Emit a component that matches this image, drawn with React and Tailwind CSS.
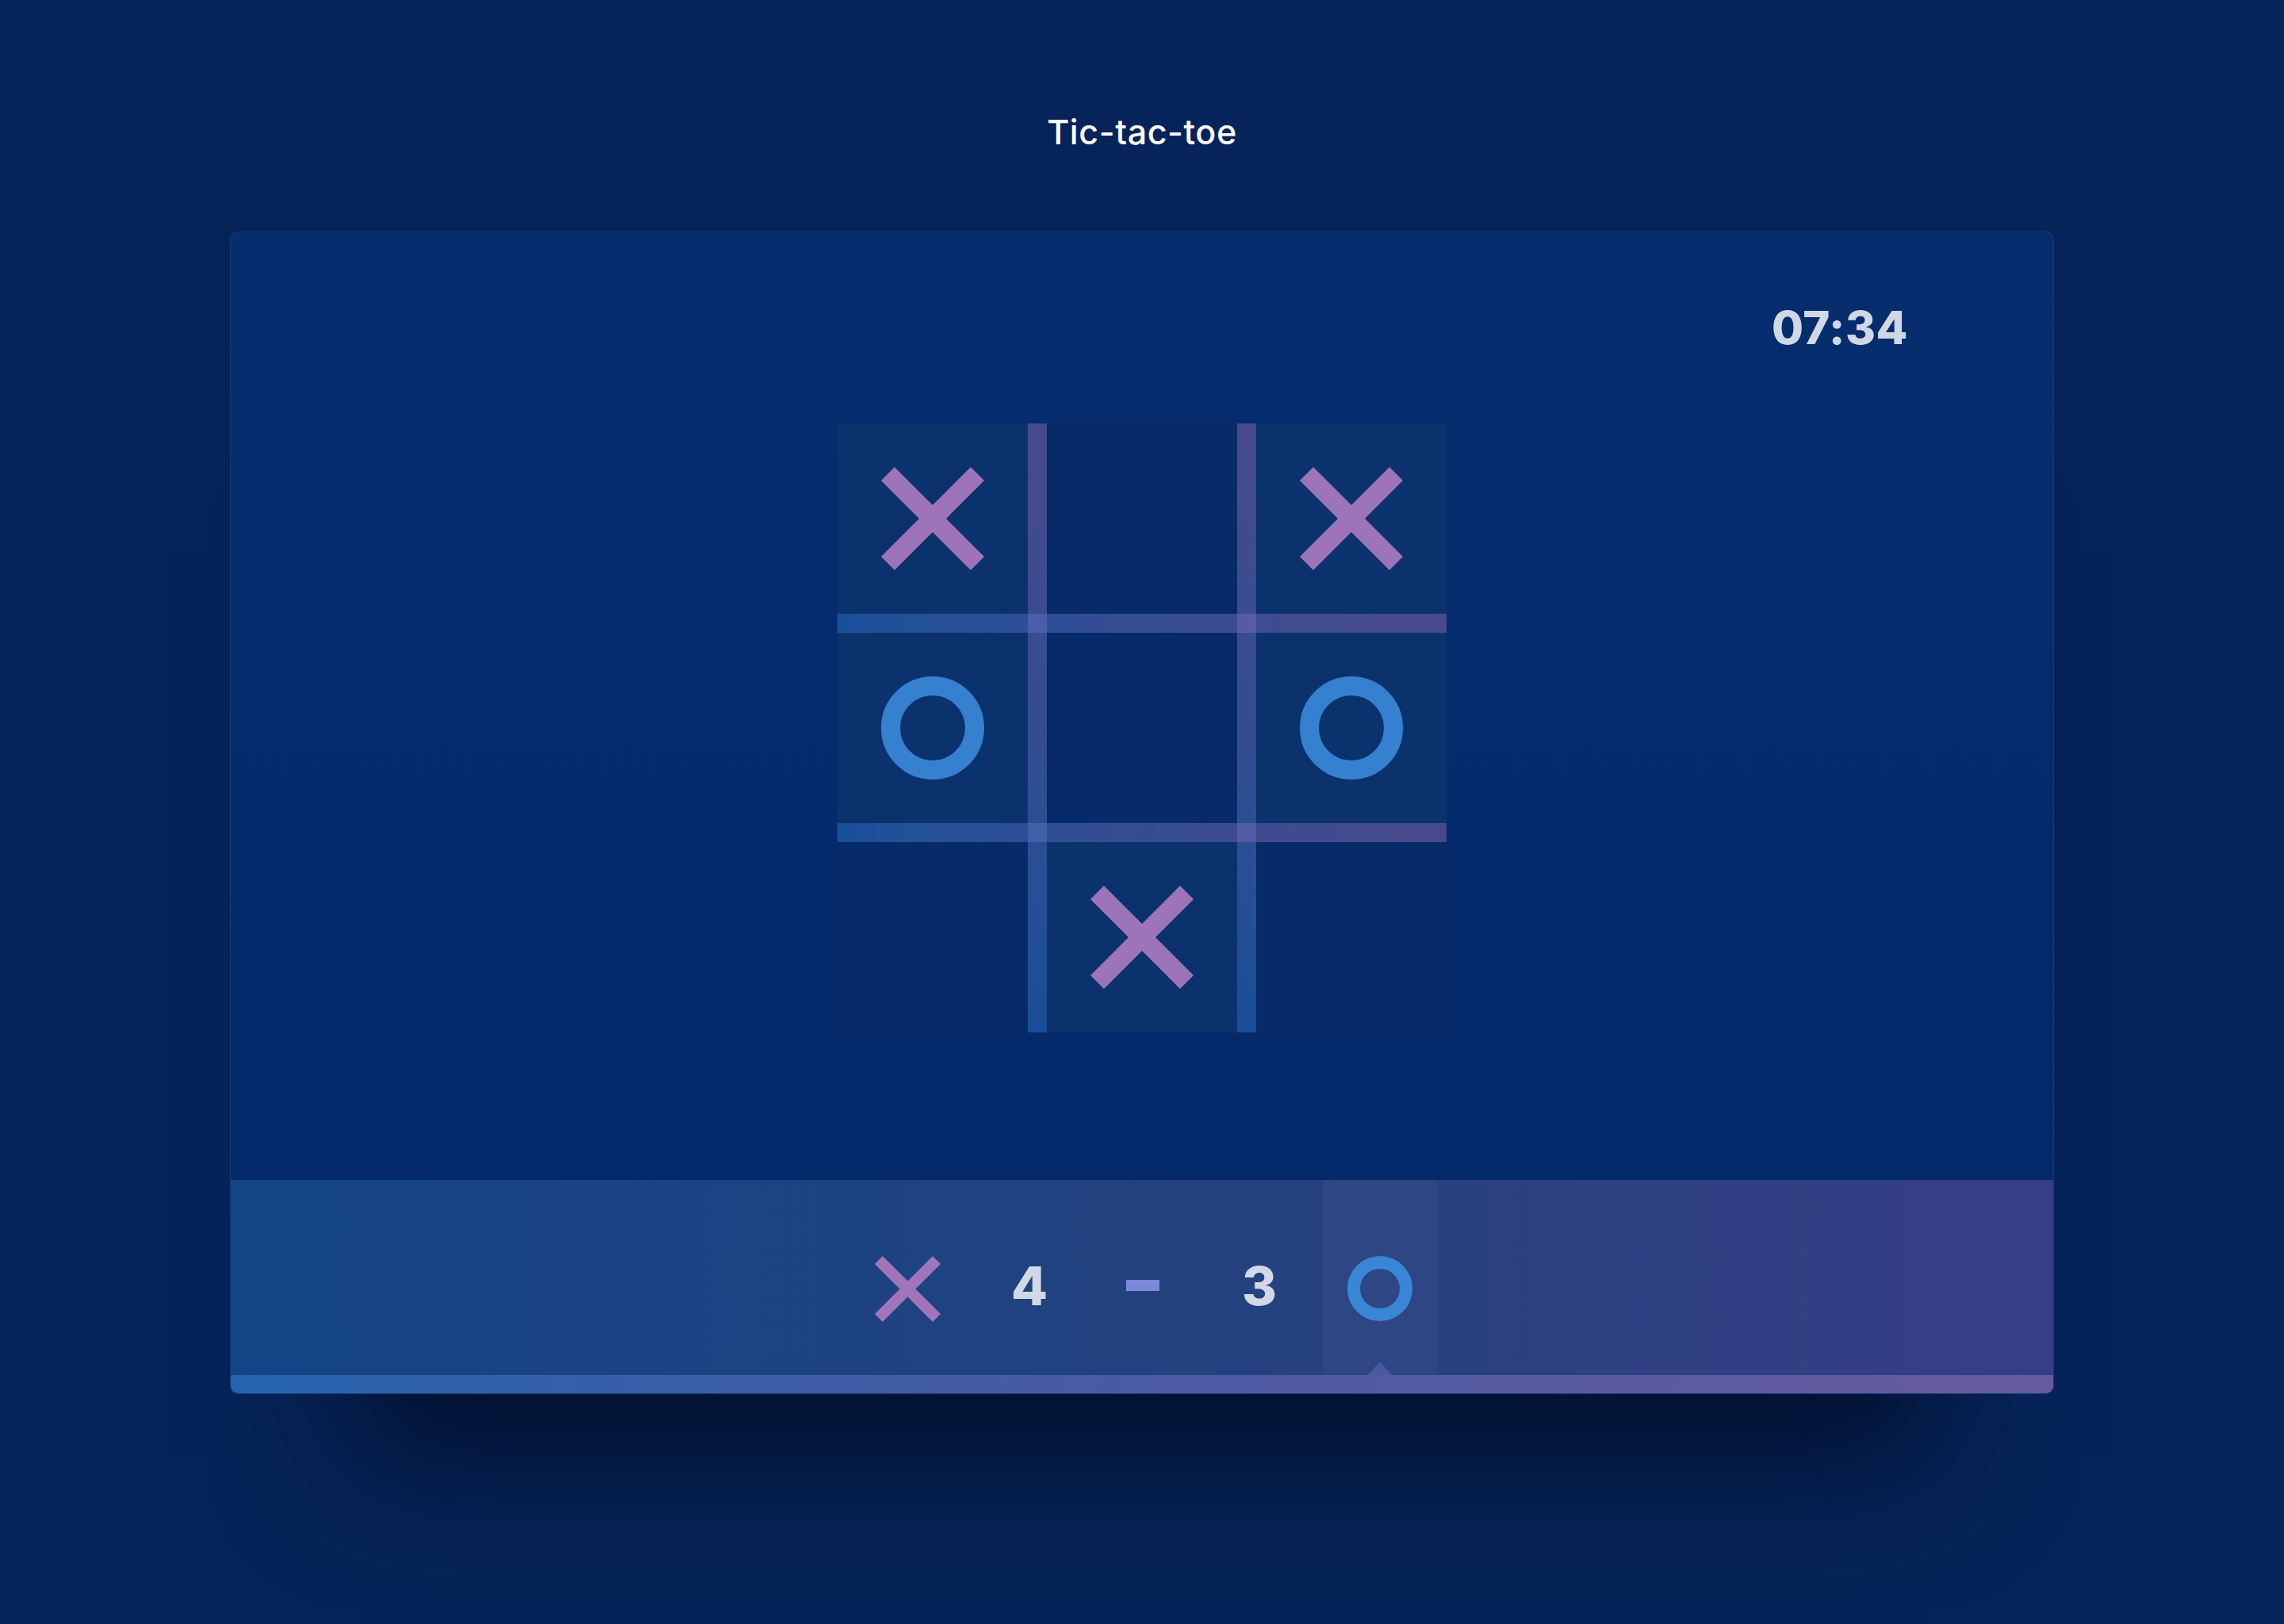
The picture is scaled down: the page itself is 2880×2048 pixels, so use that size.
import React from "react";

function XMark({ size = 130, stroke = 24, color = "#9d74b7" }) {
  const i = stroke / (2 * Math.SQRT2);
  return (
    <svg width={size} height={size} viewBox={`0 0 ${size} ${size}`}>
      <line x1={i} y1={i} x2={size - i} y2={size - i} stroke={color} strokeWidth={stroke} strokeLinecap="butt" />
      <line x1={size - i} y1={i} x2={i} y2={size - i} stroke={color} strokeWidth={stroke} strokeLinecap="butt" />
    </svg>
  );
}

function OMark({ size = 130, stroke = 24, color = "#3581d0" }) {
  const r = (size - stroke) / 2;
  return (
    <svg width={size} height={size} viewBox={`0 0 ${size} ${size}`}>
      <circle cx={size / 2} cy={size / 2} r={r} fill="none" stroke={color} strokeWidth={stroke} />
    </svg>
  );
}

const cells = [
  { c: "col-start-1", r: "row-start-1", v: "X" },
  { c: "col-start-3", r: "row-start-1", v: "" },
  { c: "col-start-5", r: "row-start-1", v: "X" },
  { c: "col-start-1", r: "row-start-3", v: "O" },
  { c: "col-start-3", r: "row-start-3", v: "" },
  { c: "col-start-5", r: "row-start-3", v: "O" },
  { c: "col-start-1", r: "row-start-5", v: "" },
  { c: "col-start-3", r: "row-start-5", v: "X" },
  { c: "col-start-5", r: "row-start-5", v: "" },
];

function Board() {
  return (
    <div className="grid grid-cols-[240px_24px_240px_24px_240px] grid-rows-[240px_24px_240px_24px_240px] w-[768px] h-[768px]">
      {cells.map((cell, idx) => (
        <div
          key={idx}
          className={`${cell.c} ${cell.r} flex items-center justify-center ${
            cell.v ? "bg-[#0c326e]" : "bg-[#072b68]"
          }`}
        >
          {cell.v === "X" && <XMark />}
          {cell.v === "O" && <OMark />}
        </div>
      ))}
      <div className="col-start-2 col-end-3 row-start-1 row-end-6 bg-gradient-to-b from-[#8767ac]/50 to-[#2b73c4]/50" />
      <div className="col-start-4 col-end-5 row-start-1 row-end-6 bg-gradient-to-b from-[#8767ac]/50 to-[#2b73c4]/50" />
      <div className="col-start-1 col-end-6 row-start-2 row-end-3 bg-gradient-to-r from-[#2d75c8]/50 to-[#8d65ac]/50" />
      <div className="col-start-1 col-end-6 row-start-4 row-end-5 bg-gradient-to-r from-[#2d75c8]/50 to-[#8d65ac]/50" />
    </div>
  );
}

export default function App() {
  return (
    <div
      className="min-h-[2048px] w-full bg-[#062459] flex flex-col items-center"
      style={{ fontFamily: "Inter, 'Noto Sans', sans-serif" }}
    >
      <h1 className="pt-[145px] text-[43px] leading-none font-medium text-white tracking-[0.6px]">
        Tic-tac-toe
      </h1>

      <div className="mt-[104px] w-[2300px] h-[1466px] rounded-[10px] overflow-hidden border border-white/[0.07] flex flex-col bg-gradient-to-b from-[#062d6d] to-[#03296a] shadow-[0_240px_160px_-160px_rgba(1,12,36,0.85)]">
        {/* main area */}
        <div className="h-[1195px] flex flex-col">
          <div className="pt-[91px] pr-[183px] flex justify-end">
            <span className="text-[58px] leading-none font-extrabold text-[#d0d8e6] tracking-[0.5px]">07:34</span>
          </div>
          <div className="mt-[92px] flex justify-center">
            <Board />
          </div>
        </div>

        {/* score bar */}
        <div className="h-[246px] flex justify-center bg-gradient-to-r from-[#134486] via-[#22427f] to-[#363e85]">
          <div className="w-[152px] flex items-center justify-center pt-[28px]">
            <XMark size={83} stroke={14} color="#a075ba" />
          </div>
          <div className="w-[148px] flex items-center justify-center pt-[28px]">
            <span className="text-[67px] leading-none font-extrabold text-[#d2d9e6] pb-[7px] pl-[8px]">4</span>
          </div>
          <div className="w-[146px] flex items-center justify-center pt-[28px]">
            <div className="w-[42px] h-[14px] bg-[#7b8ad8] mb-[8px]" />
          </div>
          <div className="w-[154px] flex items-center justify-center pt-[28px]">
            <span className="text-[67px] leading-none font-extrabold text-[#d2d9e6] pb-[7px] pr-[6px]">3</span>
          </div>
          <div className="relative w-[144px] flex items-center justify-center pt-[28px] bg-white/[0.03]">
            <OMark size={82} stroke={16} color="#3a86d6" />
            <svg
              className="absolute bottom-0 left-1/2 -translate-x-1/2"
              width="30"
              height="17"
              viewBox="0 0 30 17"
            >
              <polygon points="15,0 30,17 0,17" fill="#4b58a1" />
            </svg>
          </div>
        </div>
        <div className="h-[23px] bg-gradient-to-r from-[#2363ae] via-[#4a5aa3] to-[#675a9e]" />
      </div>
    </div>
  );
}
